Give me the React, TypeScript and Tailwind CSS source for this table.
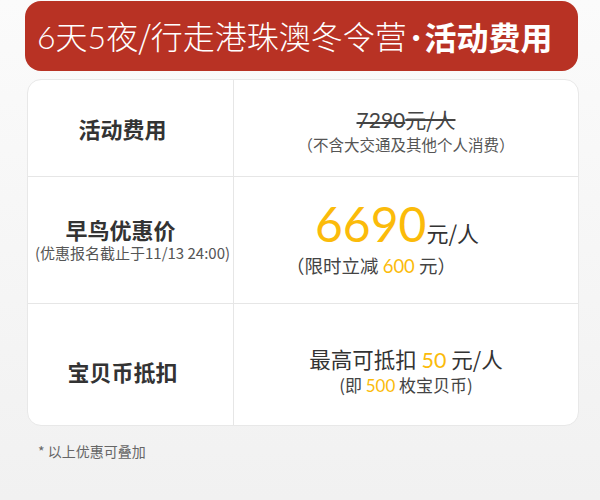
import React from "react";

const cjk = { fontFamily: '"Noto Sans CJK SC", "Noto Sans", sans-serif' };
const num = { fontFamily: 'Lato, "Noto Sans CJK SC", sans-serif' };

export default function App() {
  return (
    <div
      className="w-[600px] h-[500px] overflow-hidden bg-gradient-to-b from-[#fbfbfb] to-[#f1f1f1] text-[#333]"
      style={cjk}
    >
      <div className="pt-[1px] pl-[25px] pr-[22px]">
        <div className="h-[70px] rounded-[16px] bg-[#b83224] flex items-center pl-[12px] text-white text-[32px] leading-none whitespace-nowrap">
          <span className="font-light">
            <span style={num} className="font-light">6</span>天<span style={num} className="font-light">5</span>夜/行走港珠澳冬令营
          </span>
          <span style={num} className="font-bold pl-[5px] pr-[4px]">·</span>
          <span className="font-bold">活动费用</span>
        </div>
      </div>

      <div className="mt-[8px] ml-[27px] w-[552px] rounded-[14px] bg-white border border-[#e8e8e8] overflow-hidden">
        <div className="grid grid-cols-[206px_1fr] h-[97px] border-b border-[#e6e6e6]">
          <div className="border-r border-[#e6e6e6] flex items-center justify-center pr-[16px]">
            <span className="text-[22px] font-bold text-[#333]">活动费用</span>
          </div>
          <div className="flex flex-col items-center justify-center pt-[2px]">
            <span className="text-[21px] leading-[28px] text-[#444] line-through whitespace-nowrap">
              <span style={num}>7290</span>元/人
            </span>
            <span className="text-[15.5px] leading-[20px] text-[#555] whitespace-nowrap">（不含大交通及其他个人消费）</span>
          </div>
        </div>

        <div className="grid grid-cols-[206px_1fr] h-[127px] border-b border-[#e6e6e6]">
          <div className="border-r border-[#e6e6e6] flex flex-col items-center justify-center pb-[2px]">
            <span className="text-[22px] leading-[28px] font-bold text-[#333] pr-[20px]">早鸟优惠价</span>
            <span className="text-[15px] leading-[20px] text-[#555] whitespace-nowrap pl-[4px]">
              (优惠报名截止于11/13 24:00)
            </span>
          </div>
          <div className="flex items-center pl-[56px] pb-[6px]">
            <div className="flex flex-col items-start">
              <div className="ml-[25px] flex items-baseline whitespace-nowrap">
                <span style={num} className="text-[48px] leading-[56px] text-[#fbbb0a] font-normal">6690</span>
                <span className="text-[22px] text-[#333]">元/人</span>
              </div>
              <span className="text-[18.5px] leading-[26px] text-[#444] whitespace-nowrap -ml-[4px]">
                （限时立减 <span style={num} className="text-[#fbbb0a]">600</span> 元）
              </span>
            </div>
          </div>
        </div>

        <div className="grid grid-cols-[206px_1fr] h-[121px]">
          <div className="border-r border-[#e6e6e6] flex items-center justify-center pr-[16px] pt-[14px]">
            <span className="text-[22px] font-bold text-[#333]">宝贝币抵扣</span>
          </div>
          <div className="flex flex-col items-center justify-center pt-[12px]">
            <span className="text-[21.5px] leading-[28px] text-[#333] whitespace-nowrap">
              最高可抵扣 <span style={num} className="text-[#fbbb0a]">50</span> 元/人
            </span>
            <span className="text-[17px] leading-[22px] text-[#444] whitespace-nowrap">
              (即 <span style={num} className="text-[#fbbb0a]">500</span> 枚宝贝币)
            </span>
          </div>
        </div>
      </div>

      <div className="mt-[15px] ml-[38px] text-[14px] text-[#666]">* 以上优惠可叠加</div>
    </div>
  );
}
